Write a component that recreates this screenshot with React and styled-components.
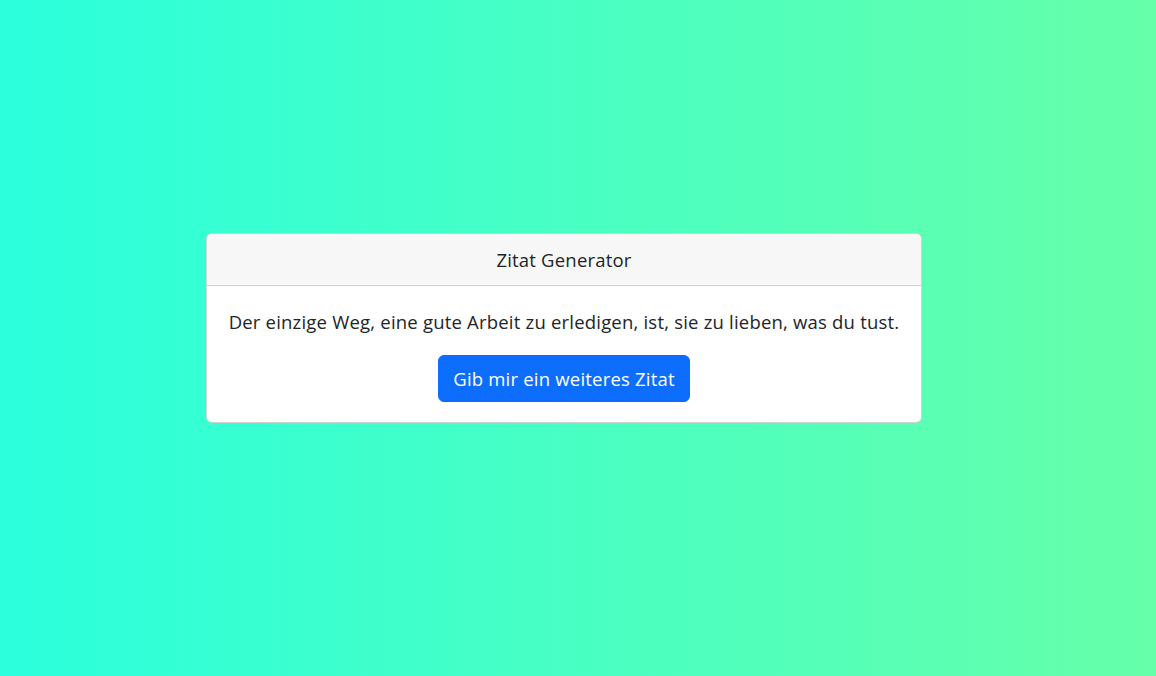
import styled, { createGlobalStyle } from "styled-components";

const GlobalStyle = createGlobalStyle`
  html, body {
    margin: 0;
    padding: 0;
  }
  body {
    font-family: "Open Sans", "Noto Sans", sans-serif;
    color: #212529;
  }
`;

const Page = styled.div`
  min-height: 100vh;
  box-sizing: border-box;
  display: flex;
  align-items: center;
  justify-content: center;
  padding: 0 28px 21px 0;
  background: linear-gradient(to right, #2bffdd, #66ffa9);
`;

const Card = styled.div`
  width: 716px;
  box-sizing: border-box;
  background: #fff;
  border: 1px solid rgba(0, 0, 0, 0.175);
  border-radius: 6px;
  overflow: hidden;
`;

const Header = styled.div`
  background: #f7f7f7;
  border-bottom: 1px solid #cfcfcf;
  padding: 13px 20px 12px;
  line-height: 26px;
  font-size: 18.5px;
  letter-spacing: 0.2px;
  text-align: center;
`;

const Body = styled.div`
  padding: 22px 20px 20px;
  display: flex;
  flex-direction: column;
  align-items: center;
`;

const Quote = styled.p`
  margin: 0 0 20px;
  font-size: 18.5px;
  letter-spacing: 0.2px;
  line-height: 27px;
  text-align: center;
`;

const Button = styled.button`
  font-family: inherit;
  font-size: 18.5px;
  letter-spacing: 0.2px;
  line-height: 27px;
  color: #fff;
  background: #0d6efd;
  border: 1px solid #0d6efd;
  border-radius: 6px;
  padding: 9px 14px;
  cursor: pointer;
`;

export default function App() {
  return (
    <>
      <GlobalStyle />
      <Page>
        <Card>
          <Header>Zitat Generator</Header>
          <Body>
            <Quote>
              Der einzige Weg, eine gute Arbeit zu erledigen, ist, sie zu lieben, was du tust.
            </Quote>
            <Button>Gib mir ein weiteres Zitat</Button>
          </Body>
        </Card>
      </Page>
    </>
  );
}
